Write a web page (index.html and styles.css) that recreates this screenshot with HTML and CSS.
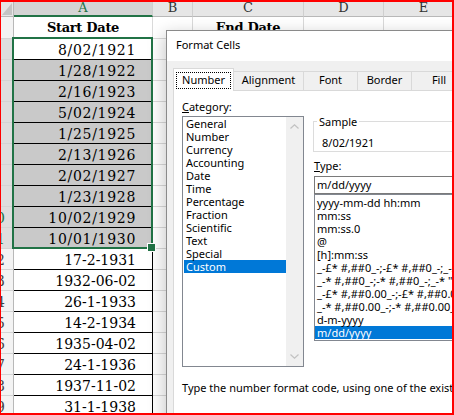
FILE: index.html
```html
<!DOCTYPE html>
<html lang="en">
<head>
  <meta charset="UTF-8" />
  <title>Format Cells</title>
  <link rel="stylesheet" href="styles.css">
</head>
<body>
<div class="screen">

  <!-- worksheet -->
  <div class="sheet">
    <div class="row hdr">
      <div class="corner"><svg width="10" height="12" viewBox="0 0 10 12"><path d="M10 0V12H0Z" fill="#c4c4c4"/></svg></div>
      <div class="ch on">A</div><div class="ch">B</div><div class="ch">C</div><div class="ch">D</div><div class="ch">E</div>
    </div>
    <div class="row r1">
      <div class="rh"><span>1</span></div><div class="head">Start Date</div><div></div><div class="head">End Date</div><div></div><div></div>
    </div>
    <div class="row">
      <div class="rh on"><span>2</span></div><div class="a sl">8/02/1921</div><div></div><div></div><div></div><div></div>
    </div>
    <div class="row">
      <div class="rh on"><span>3</span></div><div class="a sl pick">1/28/1922</div><div></div><div></div><div></div><div></div>
    </div>
    <div class="row">
      <div class="rh on"><span>4</span></div><div class="a sl pick">2/16/1923</div><div></div><div></div><div></div><div></div>
    </div>
    <div class="row">
      <div class="rh on"><span>5</span></div><div class="a sl pick">5/02/1924</div><div></div><div></div><div></div><div></div>
    </div>
    <div class="row">
      <div class="rh on"><span>6</span></div><div class="a sl pick">1/25/1925</div><div></div><div></div><div></div><div></div>
    </div>
    <div class="row">
      <div class="rh on"><span>7</span></div><div class="a sl pick">2/13/1926</div><div></div><div></div><div></div><div></div>
    </div>
    <div class="row">
      <div class="rh on"><span>8</span></div><div class="a sl pick">2/02/1927</div><div></div><div></div><div></div><div></div>
    </div>
    <div class="row">
      <div class="rh on"><span>9</span></div><div class="a sl pick">1/23/1928</div><div></div><div></div><div></div><div></div>
    </div>
    <div class="row">
      <div class="rh on"><span>10</span></div><div class="a sl pick">10/02/1929</div><div></div><div></div><div></div><div></div>
    </div>
    <div class="row">
      <div class="rh on"><span>11</span></div><div class="a sl pick">10/01/1930</div><div></div><div></div><div></div><div></div>
    </div>
    <div class="row">
      <div class="rh"><span>12</span></div><div class="a">17-2-1931</div><div></div><div></div><div></div><div></div>
    </div>
    <div class="row">
      <div class="rh"><span>13</span></div><div class="a">1932-06-02</div><div></div><div></div><div></div><div></div>
    </div>
    <div class="row">
      <div class="rh"><span>14</span></div><div class="a">26-1-1933</div><div></div><div></div><div></div><div></div>
    </div>
    <div class="row">
      <div class="rh"><span>15</span></div><div class="a">14-2-1934</div><div></div><div></div><div></div><div></div>
    </div>
    <div class="row">
      <div class="rh"><span>16</span></div><div class="a">1935-04-02</div><div></div><div></div><div></div><div></div>
    </div>
    <div class="row">
      <div class="rh"><span>17</span></div><div class="a">24-1-1936</div><div></div><div></div><div></div><div></div>
    </div>
    <div class="row">
      <div class="rh"><span>18</span></div><div class="a">1937-11-02</div><div></div><div></div><div></div><div></div>
    </div>
    <div class="row">
      <div class="rh"><span>19</span></div><div class="a">31-1-1938</div><div></div><div></div><div></div><div></div>
    </div>
  </div>

  <div class="selection"></div>

  <!-- Format Cells dialog -->
  <div class="dialog">
    <div class="title">Format Cells</div>
    <div class="dlg-body">
      <div class="tabs">
        <div class="tab active"><span>Number</span></div>
        <div class="tab w-align">Alignment</div>
        <div class="tab w-font">Font</div>
        <div class="tab w-border">Border</div>
        <div class="tab w-fill">Fill</div>
        <div class="tab">Protection</div>
      </div>
      <div class="page">
        <div class="cols">
          <div class="cat">
            <div class="lbl"><u>C</u>ategory:</div>
            <div class="listbox">
              <ul class="items">
                <li>General</li>
                <li>Number</li>
                <li>Currency</li>
                <li>Accounting</li>
                <li>Date</li>
                <li>Time</li>
                <li>Percentage</li>
                <li>Fraction</li>
                <li>Scientific</li>
                <li>Text</li>
                <li>Special</li>
                <li class="sel">Custom</li>
              </ul>
              <div class="vscroll">
                <svg width="9" height="5" viewBox="0 0 9 5"><path d="M0.5 4.5L4.5 0.8L8.5 4.5" fill="none" stroke="#c2c2c2" stroke-width="1.2"/></svg>
                <svg width="9" height="5" viewBox="0 0 9 5"><path d="M0.5 0.5L4.5 4.2L8.5 0.5" fill="none" stroke="#c2c2c2" stroke-width="1.2"/></svg>
              </div>
            </div>
          </div>
          <div class="fmt">
            <fieldset class="sample">
              <legend>Sample</legend>
              <div>8/02/1921</div>
            </fieldset>
            <div class="lbl type-lbl"><u>T</u>ype:</div>
            <div class="type-input">m/dd/yyyy</div>
            <ul class="types">
              <li>yyyy-mm-dd hh:mm</li>
              <li>mm:ss</li>
              <li>mm:ss.0</li>
              <li>@</li>
              <li>[h]:mm:ss</li>
              <li>_-£* #,##0_-;-£* #,##0_-;_-£* "-"_-;_-@_-</li>
              <li>_-* #,##0_-;-* #,##0_-;_-* "-"_-;_-@_-</li>
              <li>_-£* #,##0.00_-;-£* #,##0.00_-;_-£* "-"??_-;_-@_-</li>
              <li>_-* #,##0.00_-;-* #,##0.00_-;_-* "-"??_-;_-@_-</li>
              <li>d-m-yyyy</li>
              <li class="sel">m/dd/yyyy</li>
            </ul>
          </div>
        </div>
        <p class="hint">Type the number format code, using one of the existing codes as a starting point.</p>
      </div>
    </div>
  </div>

  <div class="frame"></div>
</div>
</body>
</html>
```

FILE: styles.css
```css
* {
  box-sizing: border-box;
}

body {
  margin: 0;
  background: #fff;
  overflow: hidden;
}

.screen {
  position: relative;
  width: 454px;
  height: 415px;
  overflow: hidden;
}

/* worksheet */
.sheet {
  font-family: "DejaVu Serif", serif;
  font-size: 14px;
  color: #000;
}

.row {
  display: grid;
  grid-template-columns: 14px 139px 40px 111px 80px 80px;
  height: 21px;
}

.row > div {
  border-right: 1px solid #dadada;
  border-bottom: 1px solid #dadada;
  padding-top: 1px;
  line-height: 20px;
  white-space: nowrap;
  overflow: hidden;
}

.row.r1 {
  height: 22px;
}

.row.hdr {
  height: 17px;
}

.row.hdr > div {
  padding-top: 0;
  font-size: 13px;
  line-height: 16px;
  text-align: center;
  color: #333;
  background: #e6e6e6;
  border-right-color: #cfcfcf;
  border-bottom-color: #b8b8b8;
}

.row.hdr > .corner {
  display: flex;
  justify-content: flex-end;
  align-items: flex-end;
  padding: 0 1px 1px 0;
  border-right-color: #b8b8b8;
}

.row.hdr > .ch.on {
  color: #217346;
  background: #d4d4d4;
  border-bottom: 2px solid #217346;
  line-height: 15px;
}

.row > .rh {
  background: #f3f3f3;
  border-right-color: #b8b8b8;
  border-bottom-color: #d4d4d4;
  color: #444;
}

.row > .rh.on {
  background: #dedede;
  color: #217346;
}

/* only the last digit of the row number shows in the narrow header */
.rh span {
  display: block;
  width: 34px;
  margin-left: -21px;
  text-align: center;
}

.row > .head {
  text-align: center;
  font-weight: bold;
  font-size: 13px;
  letter-spacing: -0.3px;
}

.row > .a {
  text-align: right;
  padding-right: 16px;
  border-right-color: #000;
  border-bottom-color: #000;
}

.row > .sl {
  letter-spacing: 0.7px;
}

.row > .pick {
  background: #c9c9c9;
}

.selection {
  position: absolute;
  left: 12px;
  top: 37px;
  width: 141px;
  height: 212px;
  border: 2px solid #217346;
}

.selection::after {
  content: "";
  position: absolute;
  right: -5px;
  bottom: -5px;
  width: 7px;
  height: 7px;
  background: #217346;
  border: 1px solid #fff;
}

/* dialog */
.dialog {
  position: absolute;
  left: 166px;
  top: 30px;
  width: 340px;
  height: 420px;
  background: #f0f0f0;
  border: 1px solid #8a8a8a;
  box-shadow: -2px 4px 16px rgba(0,0,0,0.22);
  font-family: "Noto Sans", sans-serif;
  font-size: 11px;
  color: #000;
}

.title {
  height: 30px;
  line-height: 28px;
  padding-left: 9px;
  background: #fff;
}

.dlg-body {
  padding: 7px 0 0 6px;
}

.tabs {
  display: flex;
  align-items: flex-end;
  height: 22px;
}

.tab {
  flex: none;
  width: 60px;
  height: 19px;
  line-height: 16px;
  text-align: center;
  white-space: nowrap;
  background: #f0f0f0;
  border: 1px solid #d9d9d9;
  border-bottom: none;
  margin-left: -1px;
}

.tab.active {
  width: 61px;
  height: 23px;
  margin-left: 0;
  margin-bottom: -1px;
  padding-top: 3px;
  background: #fff;
  position: relative;
  z-index: 1;
}

.tab.active span {
  display: inline-block;
  border: 1px dotted #000;
  padding: 0 5px 1px;
  line-height: 14px;
}

.w-align { width: 71px; }
.w-font { width: 55px; }
.w-border { width: 55px; }
.w-fill { width: 56px; }

.page {
  height: 330px;
  background: #fff;
  border: 1px solid #d9d9d9;
  padding: 8px 0 0 8px;
}

.cols {
  display: flex;
}

.cat {
  flex: none;
  width: 122px;
}

.lbl {
  line-height: 15px;
}

.listbox {
  display: flex;
  height: 251px;
  margin-top: 2px;
  border: 1px solid #828790;
}

.items,
.types {
  list-style: none;
  margin: 0;
}

.items {
  flex: 1;
  padding: 0 0 0 1px;
}

.items li,
.types li {
  line-height: 13px;
  padding-left: 2px;
  white-space: nowrap;
}

.sel {
  background: #0078d7;
  color: #fff;
}

.vscroll {
  width: 17px;
  background: #f0f0f0;
  display: flex;
  flex-direction: column;
  justify-content: space-between;
  align-items: center;
  padding: 7px 0 7px;
}

.vscroll svg {
  display: block;
}

.fmt {
  flex: 1;
  margin-left: 10px;
  min-width: 0;
}

.sample {
  margin: 15px 0 0 -1px;
  padding: 6px 0 1px 8px;
  border: 1px solid #dcdcdc;
  min-width: 0;
}

.sample legend {
  padding: 0 2px;
  margin-left: -5px;
  line-height: 15px;
}

.sample div {
  line-height: 15px;
}

.type-lbl {
  margin-top: 6px;
}

.type-input {
  margin-top: 3px;
  height: 18px;
  border: 1px solid #7a7a7a;
  padding-left: 2px;
  line-height: 16px;
}

.types {
  height: 147px;
  padding: 1px 0 0;
  border: 1px solid #828790;
  overflow: hidden;
}

.hint {
  margin: 13px 0 0;
  line-height: 15px;
  white-space: nowrap;
}

.frame {
  position: absolute;
  inset: 0;
  border: 2px solid #f00;
  border-width: 2px 2px 2px 1px;
  pointer-events: none;
}
```
